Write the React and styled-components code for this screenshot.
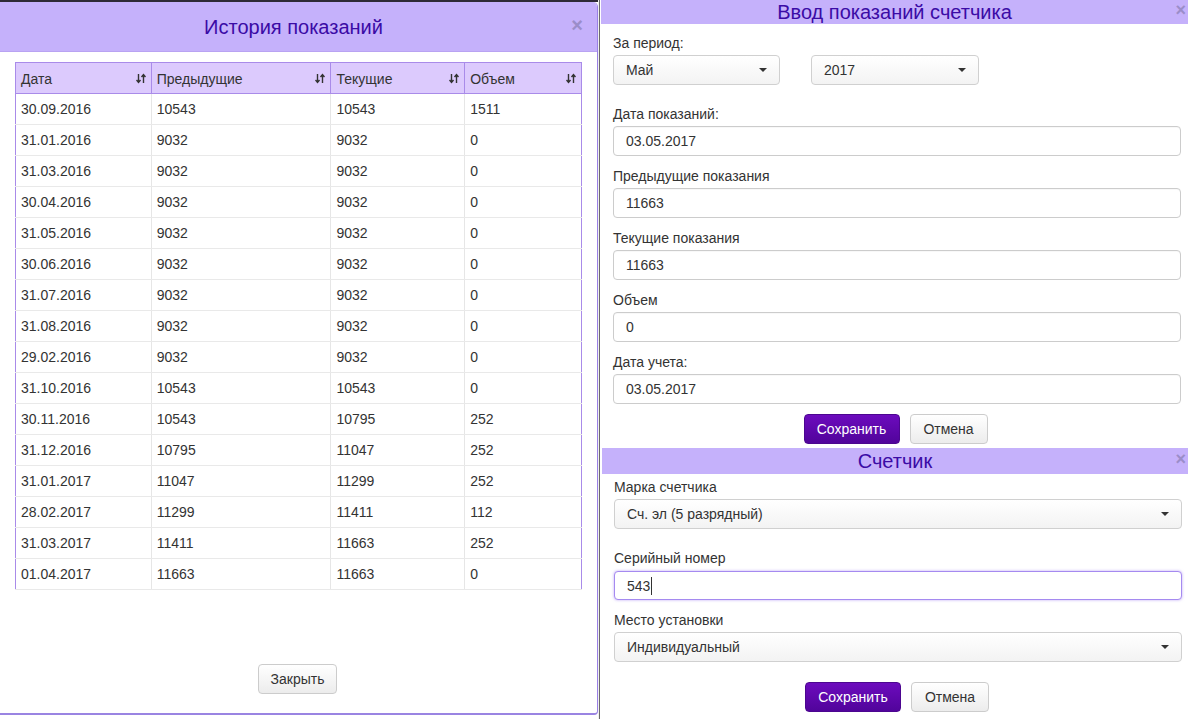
import React from "react";
import styled, { createGlobalStyle } from "styled-components";

const Global = createGlobalStyle`
  html, body { margin: 0; padding: 0; background: #fff; }
  body { font-family: "Liberation Sans", Arial, sans-serif; font-size: 14px; color: #333; }
  * { box-sizing: border-box; }
`;

const Page = styled.div`
  display: flex;
  width: 1188px;
  height: 719px;
  overflow: hidden;
  background: #fff;
`;

const LeftCol = styled.div`
  width: 598px;
  flex: none;
  border-top: 2px solid #2e2a36;
  height: 715px;
  display: flex;
`;

const Modal = styled.div`
  flex: 1;
  display: flex;
  flex-direction: column;
  background: #fff;
  border-right: 1px solid #9a80e6;
  border-bottom: 2px solid #9a84e2;
  border-top-right-radius: 5px;
  border-bottom-right-radius: 4px;
  overflow: hidden;
`;

const ModalHeader = styled.div`
  position: relative;
  height: 50px;
  flex: none;
  background: #c5b1fb;
  border-bottom: 1px solid #b9a3f2;
  display: flex;
  align-items: center;
  justify-content: center;
  padding-right: 10px;
`;

const Title = styled.div`
  font-size: 20px;
  color: #3b0ba6;
  line-height: ${(p) => p.$lh || "24px"};
`;

const Close = styled.span`
  position: absolute;
  right: ${(p) => p.$right || "14px"};
  top: ${(p) => p.$top || "12px"};
  font-size: ${(p) => p.$size || "20px"};
  line-height: 1;
  color: #9b8dc9;
  font-weight: bold;
`;

const ModalBody = styled.div`
  padding: 10px 15px 0 15px;
  flex: 1;
`;

const Table = styled.table`
  width: 567px;
  border-collapse: collapse;
  border: 1px solid #a98be9;
  font-size: 14px;
`;

const Th = styled.th`
  height: 31px;
  background: #dccafd;
  border: 1px solid #a98be9;
  font-weight: normal;
  text-align: left;
  padding: 1px 5px 0;
  color: #333;
  width: ${(p) => p.$w};
`;

const ThInner = styled.div`
  display: flex;
  align-items: center;
  justify-content: space-between;
`;

const Td = styled.td`
  height: 31px;
  padding: 0 5px;
  border-left: 1px solid #e6e6e6;
  border-right: 1px solid #e6e6e6;
  border-bottom: 1px solid #e9e9e9;
  color: #333;
  &:first-child { border-left-color: #a98be9; }
  &:last-child { border-right-color: #a98be9; }
`;

const ModalFooter = styled.div`
  display: flex;
  justify-content: center;
  padding-bottom: 19px;
  padding-right: 2px;
`;

const Btn = styled.button`
  height: 30px;
  padding: 0 12px;
  font-family: inherit;
  font-size: 14px;
  border-radius: 4px;
  cursor: pointer;
  color: ${(p) => (p.$primary ? "#fff" : "#333")};
  border: 1px solid ${(p) => (p.$primary ? "#4c0690" : "#ccc")};
  background: ${(p) =>
    p.$primary
      ? "linear-gradient(#6c0bbd, #51049b)"
      : "linear-gradient(#fff, #ececec)"};
  width: ${(p) => p.$w};
`;

const Divider = styled.div`
  width: 3px;
  flex: none;
  background: linear-gradient(90deg, #f0f0f0 0, #f0f0f0 1px, #6b6b6b 1px, #6b6b6b 2px, #fff 2px);
`;

const RightCol = styled.div`
  flex: 1;
  display: flex;
  flex-direction: column;
  background: #fff;
`;

const SectionHeader = styled.div`
  position: relative;
  height: ${(p) => p.$h};
  background: #c5b1fb;
  display: flex;
  align-items: center;
  justify-content: center;
  margin-left: ${(p) => p.$ml || "0"};
  margin-top: ${(p) => p.$mt || "0"};
`;

const Form = styled.div`
  padding: ${(p) => p.$pad};
  display: flex;
  flex-direction: column;
`;

const Group = styled.div`
  display: flex;
  flex-direction: column;
  margin-bottom: ${(p) => p.$mb || "10px"};
`;

const Label = styled.div`
  line-height: 20px;
  height: 20px;
  margin-bottom: ${(p) => p.$mb || "2px"};
  color: #333;
`;

const Row = styled.div`
  display: flex;
  gap: 31px;
`;

const Input = styled.div`
  height: ${(p) => p.$h || "30px"};
  border: 1px solid ${(p) => (p.$focus ? "#a58af0" : "#ccc")};
  border-radius: 4px;
  padding-left: 12px;
  display: flex;
  align-items: center;
  color: #333;
  background: #fff;
  box-shadow: ${(p) =>
    p.$focus ? "0 0 3px rgba(150,110,240,0.6)" : "inset 0 1px 1px rgba(0,0,0,0.03)"};
`;

const Caret = styled.span`
  width: 1px;
  height: 18px;
  background: #333;
  margin-left: 1px;
`;

const Select = styled.div`
  width: ${(p) => p.$w || "auto"};
  height: 30px;
  border: 1px solid #d0d0d0;
  border-radius: 4px;
  padding: 0 12px 0 12px;
  display: flex;
  align-items: center;
  justify-content: space-between;
  background: linear-gradient(#fff, #f3f3f3);
  color: #333;
`;

const Arrow = styled.span`
  width: 0;
  height: 0;
  border-left: 4px solid transparent;
  border-right: 4px solid transparent;
  border-top: 4px solid #333;
`;

const Buttons = styled.div`
  display: flex;
  justify-content: center;
  gap: 10px;
  margin-left: ${(p) => p.$ml || "0"};
`;

const SortIcon = () => (
  <svg width="10" height="11" viewBox="0 0 10 11">
    <path d="M2.5 1v8M0.5 7l2 2.5 2-2.5" stroke="#333" strokeWidth="1.4" fill="none" />
    <path d="M7.5 10V2M5.5 4l2-2.5 2 2.5" stroke="#333" strokeWidth="1.4" fill="none" />
  </svg>
);

const rows = [
  ["30.09.2016", "10543", "10543", "1511"],
  ["31.01.2016", "9032", "9032", "0"],
  ["31.03.2016", "9032", "9032", "0"],
  ["30.04.2016", "9032", "9032", "0"],
  ["31.05.2016", "9032", "9032", "0"],
  ["30.06.2016", "9032", "9032", "0"],
  ["31.07.2016", "9032", "9032", "0"],
  ["31.08.2016", "9032", "9032", "0"],
  ["29.02.2016", "9032", "9032", "0"],
  ["31.10.2016", "10543", "10543", "0"],
  ["30.11.2016", "10543", "10795", "252"],
  ["31.12.2016", "10795", "11047", "252"],
  ["31.01.2017", "11047", "11299", "252"],
  ["28.02.2017", "11299", "11411", "112"],
  ["31.03.2017", "11411", "11663", "252"],
  ["01.04.2017", "11663", "11663", "0"],
];

const cols = [
  ["Дата", "136px"],
  ["Предыдущие", "180px"],
  ["Текущие", "134px"],
  ["Объем", "117px"],
];

export default function App() {
  return (
    <>
      <Global />
      <Page>
        <LeftCol>
          <Modal>
            <ModalHeader>
              <Title>История показаний</Title>
              <Close $right="14px" $top="13px">×</Close>
            </ModalHeader>
            <ModalBody>
              <Table>
                <thead>
                  <tr>
                    {cols.map(([c, w]) => (
                      <Th key={c} $w={w}>
                        <ThInner>
                          <span>{c}</span>
                          <SortIcon />
                        </ThInner>
                      </Th>
                    ))}
                  </tr>
                </thead>
                <tbody>
                  {rows.map((r, i) => (
                    <tr key={i}>
                      {r.map((v, j) => (
                        <Td key={j}>{v}</Td>
                      ))}
                    </tr>
                  ))}
                </tbody>
              </Table>
            </ModalBody>
            <ModalFooter>
              <Btn>Закрыть</Btn>
            </ModalFooter>
          </Modal>
        </LeftCol>
        <Divider />
        <RightCol>
          <SectionHeader $h="24px">
            <Title $lh="24px">Ввод показаний счетчика</Title>
            <Close $right="2px" $top="1px" $size="18px">×</Close>
          </SectionHeader>
          <Form $pad="9px 7px 0 12px">
            <Group $mb="19px">
              <Label>За период:</Label>
              <Row>
                <Select $w="167px">
                  <span>Май</span>
                  <Arrow />
                </Select>
                <Select $w="168px">
                  <span>2017</span>
                  <Arrow />
                </Select>
              </Row>
            </Group>
            <Group>
              <Label>Дата показаний:</Label>
              <Input>03.05.2017</Input>
            </Group>
            <Group>
              <Label>Предыдущие показания</Label>
              <Input>11663</Input>
            </Group>
            <Group>
              <Label>Текущие показания</Label>
              <Input>11663</Input>
            </Group>
            <Group>
              <Label>Объем</Label>
              <Input>0</Input>
            </Group>
            <Group>
              <Label>Дата учета:</Label>
              <Input>03.05.2017</Input>
            </Group>
            <Buttons $ml="-3px">
              <Btn $primary $w="96px">Сохранить</Btn>
              <Btn $w="78px">Отмена</Btn>
            </Buttons>
          </Form>
          <SectionHeader $h="26px" $ml="1px" $mt="4px">
            <Title $lh="26px">Счетчик</Title>
            <Close $right="2px" $top="2px" $size="18px">×</Close>
          </SectionHeader>
          <Form $pad="3px 6px 0 13px">
            <Group $mb="19px">
              <Label>Марка счетчика</Label>
              <Select>
                <span>Сч. эл (5 разрядный)</span>
                <Arrow />
              </Select>
            </Group>
            <Group>
              <Label $mb="3px">Серийный номер</Label>
              <Input $focus $h="29px">
                543<Caret />
              </Input>
            </Group>
            <Group $mb="20px">
              <Label>Место установки</Label>
              <Select>
                <span>Индивидуальный</span>
                <Arrow />
              </Select>
            </Group>
            <Buttons $ml="-2px">
              <Btn $primary $w="96px">Сохранить</Btn>
              <Btn $w="78px">Отмена</Btn>
            </Buttons>
          </Form>
        </RightCol>
      </Page>
    </>
  );
}
